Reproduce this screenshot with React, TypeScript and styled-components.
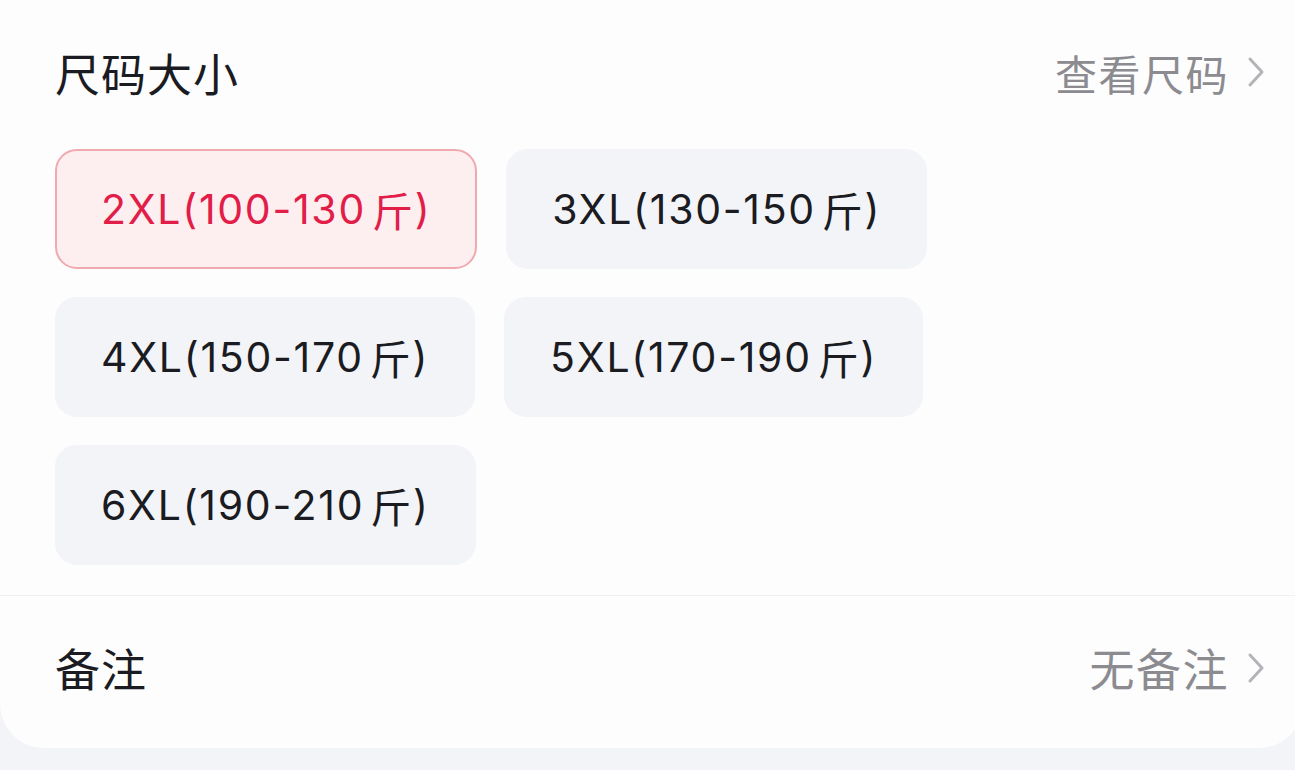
import styled, { createGlobalStyle } from "styled-components";

//types
type Size = {
  label: string;
  range: string;
};

//data
const sizes: Array<Size> = [
  { label: "2XL", range: "100-130" },
  { label: "3XL", range: "130-150" },
  { label: "4XL", range: "150-170" },
  { label: "5XL", range: "170-190" },
  { label: "6XL", range: "190-210" },
];

//styles
const GlobalStyle = createGlobalStyle`
  html, body {
    margin: 0;
    padding: 0;
    background: #f2f4f7;
    overflow: hidden;
  }
  body {
    font-family: Inter, "Noto Sans CJK SC", sans-serif;
    -webkit-font-smoothing: antialiased;
  }
`;
const Page = styled.div`
  width: 1295px;
  height: 770px;
  background: #f2f4f7;
  overflow: hidden;
`;
const Card = styled.section`
  width: 1303px;
  background: #fdfdfe;
  border-radius: 0 0 44px 44px;
`;
const Section = styled.div`
  padding: 42px 38px 30px 55px;
`;
const HeaderRow = styled.div`
  display: flex;
  align-items: center;
  justify-content: space-between;
  height: 60px;
`;
const Title = styled.h2`
  margin: 0;
  font-family: "Noto Sans CJK SC", sans-serif;
  font-size: 45px;
  font-weight: 400;
  color: #1b1b22;
  letter-spacing: 1px;
`;
const Link = styled.div<{ $size: number }>`
  display: flex;
  align-items: center;
  gap: 18px;
  font-family: "Noto Sans CJK SC", sans-serif;
  font-size: ${(p) => p.$size}px;
  color: #8b8b90;
  letter-spacing: 1.5px;
`;
const Chips = styled.div`
  display: flex;
  flex-wrap: wrap;
  gap: 28px 29px;
  margin-top: 47px;
  max-width: 900px;
`;
const Chip = styled.button<{ $active?: boolean }>`
  display: flex;
  align-items: center;
  justify-content: center;
  height: 120px;
  padding: 0 44px;
  border-radius: 22px;
  box-sizing: border-box;
  font-family: Inter, "Noto Sans CJK SC", sans-serif;
  font-size: 41px;
  font-weight: 400;
  letter-spacing: 1.7px;
  background: ${(p) => (p.$active ? "#fdeef0" : "#f3f4f8")};
  color: ${(p) => (p.$active ? "#e11d48" : "#1b1b22")};
  border: 2px solid ${(p) => (p.$active ? "#f1a9b0" : "#f3f4f8")};
`;
const Unit = styled.span`
  font-family: "Noto Sans CJK SC", sans-serif;
  margin-left: 6px;
`;
const Divider = styled.hr`
  margin: 0;
  border: none;
  height: 1px;
  background: #eef0f3;
`;
const RemarkRow = styled.div`
  display: flex;
  align-items: center;
  justify-content: space-between;
  box-sizing: border-box;
  height: 152px;
  padding: 0 38px 9px 55px;
`;

function Chevron() {
  return (
    <svg width="18" height="32" viewBox="0 0 18 32" fill="none">
      <path
        d="M3 3 L15 16 L3 29"
        stroke="#b3b3b8"
        strokeWidth="3"
        strokeLinecap="round"
        strokeLinejoin="round"
      />
    </svg>
  );
}

export default function App() {
  return (
    <Page>
      <GlobalStyle />
      <Card>
        <Section>
          <HeaderRow>
            <Title>尺码大小</Title>
            <Link $size={42}>
              查看尺码
              <Chevron />
            </Link>
          </HeaderRow>
          <Chips>
            {sizes.map((s, i) => (
              <Chip key={s.label} $active={i === 0}>
                {s.label}({s.range}
                <Unit>斤</Unit>)
              </Chip>
            ))}
          </Chips>
        </Section>
        <Divider />
        <RemarkRow>
          <Title>备注</Title>
          <Link $size={45}>
            无备注
            <Chevron />
          </Link>
        </RemarkRow>
      </Card>
    </Page>
  );
}
